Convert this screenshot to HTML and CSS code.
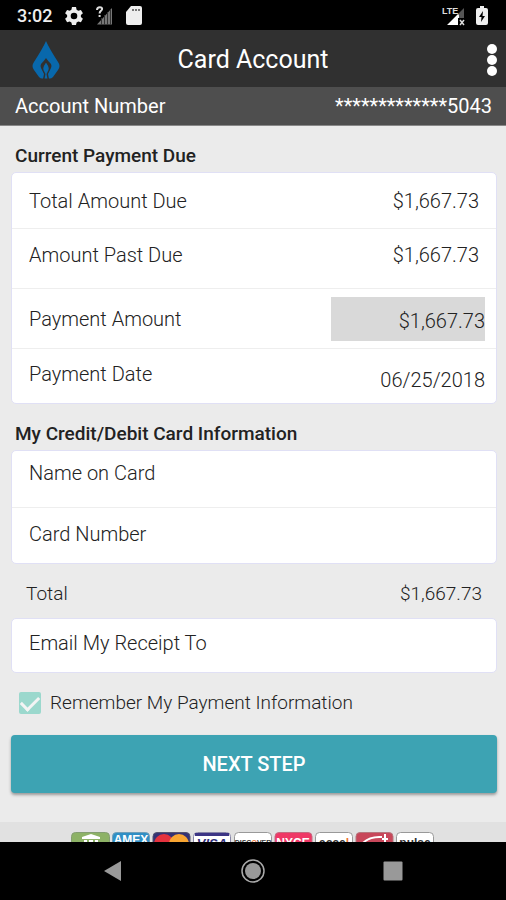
FILE: index.html
```html
<!DOCTYPE html>
<html lang="en">
<head>
<meta charset="utf-8">
<meta name="viewport" content="width=device-width, initial-scale=1">
<title>Card Account</title>
<link rel="stylesheet" href="styles.css">
</head>
<body>
<div class="status-bar">
  <div class="status-group">
    <span class="clock">3:02</span>
    <svg class="gear" width="18" height="20" viewBox="0 0 18 20" aria-hidden="true"><path fill="#eee" fill-rule="evenodd" d="M7 1h4l.6 2.7 1.7 1 2.6-.8 2 3.4-2 1.8v1.900l2 1.800-2 3.400-2.600-.800-1.700 1L11 19H7l-.6-2.600-1.700-1-2.600.800-2-3.400 2-1.800V9.100l-2-1.800 2-3.400 2.600.800 1.700-1zM9 6.700a3.300 3.300 0 1 0 0 6.600 3.300 3.300 0 0 0 0-6.600z"/></svg>
    <svg class="signal" width="17" height="20" viewBox="0 0 17 20" aria-hidden="true"><path fill="#777" d="M16 2v16.500H1z"/><path fill="none" stroke="#333" d="M5.500 12v7M8.500 9v10M11.500 6v13M14.500 3v16"/><path fill="#000" d="M0 0h8v11H0z"/><path fill="none" stroke="#ddd" stroke-width="2" d="M1 4c0-4 6-3.500 5-.5C5.500 5 3.600 5 3.600 7.500M3.600 9v2"/></svg>
    <svg width="16" height="20" viewBox="0 0 16 20" aria-hidden="true"><path fill="#eee" d="M5 0h9q2 0 2 2v15q0 2-2 2H2q-2 0-2-2V6z"/><path fill="none" stroke="#777" stroke-width="2" d="M6 4h2M9 4h2M12 4h2"/></svg>
  </div>
  <div class="status-group status-right">
    <svg width="23" height="20" viewBox="0 0 23 20" aria-hidden="true"><path fill="#555" d="M22 2v10h-5V7z"/><path fill="#fff" d="M16 8v11H5zM17 7v5h-2z"/><path stroke="#ddd" stroke-width="1.500" d="m18 14 4 5m0-5-4 5"/><text class="lte" x="0" y="8">LTE</text></svg>
    <svg width="12" height="20" viewBox="0 0 12 20" aria-hidden="true"><path fill="#eee" d="M4 0h4v2h2q2 0 2 2v13q0 2-2 2H2q-2 0-2-2V4q0-2 2-2h2z"/><path fill="#000" d="M7 5 3 11h2.500L5 16l4-6H6.500z"/></svg>
  </div>
</div>
<header class="app-bar">
  <a class="brand" href="#" aria-label="Home"><svg width="28" height="38" viewBox="0 0 28 38"><path fill="#0868ac" d="M14 0Q17 7 26 21Q29 25 26 29L21 36Q19 38 17 37.500H11Q9 38 7 36L2 29Q-1 25 2 21Q11 7 14 0z"/><path fill="#303030" d="M14 17q-2 3-5 6-1 2 0 4l3 6-1 5h1.500l1-5-2-4q-1-3 2.500-7 3.500 4 2.500 7l-2 4 1 5H17l-1-5 3-6q1-2 0-4-3-3-5-6z"/><path fill="#0868ac" d="M14 22q-2.500 3-1 6l1 4 1-4q1.500-3-1-6z"/></svg></a>
  <h1>Card Account</h1>
  <button class="menu" type="button" aria-label="More options"><svg width="12" height="34" viewBox="0 0 12 34"><g fill="#fff"><circle cx="6" cy="6" r="5"/><circle cx="6" cy="17" r="5"/><circle cx="6" cy="28" r="5"/></g></svg></button>
</header>
<div class="account-bar"><span>Account Number</span><span>*************5043</span></div>
<main>
  <form class="payment">
    <h2>Current Payment Due</h2>
    <div class="panel">
      <div class="row"><span>Total Amount Due</span><span class="value">$1,667.73</span></div>
      <div class="row row-tall row-high"><span>Amount Past Due</span><span class="value">$1,667.73</span></div>
      <div class="row row-tall"><label for="amount">Payment Amount</label><input class="amount" id="amount" type="text" value="$1,667.73"></div>
      <div class="row"><label class="raised" for="date">Payment Date</label><input class="date" id="date" type="text" value="06/25/2018"></div>
    </div>
    <h2>My Credit/Debit Card Information</h2>
    <div class="panel">
      <div class="row row-card row-high"><label class="raised" for="name">Name on Card</label><input id="name" type="text"></div>
      <div class="row row-card"><label class="raised" for="number">Card Number</label><input id="number" type="text"></div>
    </div>
    <div class="total"><span>Total</span><span>$1,667.73</span></div>
    <div class="panel">
      <div class="row row-email"><label for="email">Email My Receipt To</label><input id="email" type="email"></div>
    </div>
    <div class="remember"><input id="remember" type="checkbox" checked><label for="remember">Remember My Payment Information</label></div>
    <button class="next" type="submit">NEXT STEP</button>
  </form>
  <div class="brands">
    <svg width="364" height="24" viewBox="0 0 364 24" aria-hidden="true">
      <rect x=".5" y=".5" width="38" height="26" rx="4" fill="#8db266" stroke="#849e72"/>
      <path fill="#fff" d="m11 5 9-3 9 3v2H11zM13 8h3v9h-3zM18 8h4v9h-4zM24 8h3v9h-3z"/>
      <rect x="41.500" y=".5" width="37" height="26" rx="4" fill="#308fc5" stroke="#6f9fb9"/>
      <text class="logo logo-light" x="60" y="12">AMEX</text>
      <rect x="82" y=".5" width="37" height="26" rx="4" fill="#343275" stroke="#55536f"/>
      <circle cx="93" cy="12" r="10" fill="#e5323e"/><circle cx="108" cy="12" r="10" fill="#f8a532"/>
      <rect x="122.500" y=".5" width="37" height="26" rx="4" fill="#fff" stroke="#8886a7"/><path fill="#3c3585" d="M124 1h34v3h-34z"/>
      <text class="logo logo-visa" x="141" y="16">VISA</text>
      <rect x="163.500" y=".5" width="37" height="26" rx="4" fill="#fff" stroke="#999"/><text class="logo logo-small" x="182" y="13">DISC<tspan fill="#ed7335">O</tspan>VER</text>
      <rect x="204" y=".5" width="37" height="26" rx="4" fill="#ef3866" stroke="#c46c81"/><text class="logo logo-light" x="222" y="15">NYCE</text>
      <rect x="244.500" y=".5" width="37" height="26" rx="4" fill="#fff" stroke="#999"/><text class="logo" x="263" y="15">acce<tspan fill="#ed7335">l</tspan></text>
      <rect x="285" y=".5" width="37" height="26" rx="4" fill="#c8475a" stroke="#b6777e"/><path fill="none" stroke="#fff" stroke-width="2" d="M291 12q7-8 20-7M314 2v8M311 7h6"/>
      <rect x="325.500" y=".5" width="37" height="26" rx="4" fill="#fff" stroke="#999"/><text class="logo" x="344" y="15">pulse</text>
    </svg>
  </div>
</main>
<nav class="system-nav" aria-label="System navigation">
  <button type="button" aria-label="Back"><svg width="24" height="24" viewBox="0 0 24 24"><path fill="#999" d="m3 12 17-10v20z"/></svg></button>
  <button type="button" aria-label="Home"><svg width="24" height="24" viewBox="0 0 24 24"><circle cx="12" cy="12" r="11" fill="none" stroke="#aaa" stroke-width="1.500"/><circle cx="12" cy="12" r="8" fill="#999"/></svg></button>
  <button type="button" aria-label="Recent apps"><svg width="24" height="24" viewBox="0 0 24 24"><rect x="2.500" y="2.500" width="19" height="19" rx="1" fill="#999"/></svg></button>
</nav>
</body>
</html>
```
FILE: styles.css
```css
* { box-sizing: border-box; }
body {
  margin: 0;
  min-height: 100vh;
  display: flex;
  flex-direction: column;
  background: #ebebeb;
  color: #222;
  font-family: Roboto, "Liberation Sans", sans-serif;
  font-size: 20px;
  line-height: 24px;
}
button, input { font: inherit; color: inherit; border: 0; padding: 0; margin: 0; background: none; }
svg { display: block; }
h1, h2 { margin: 0; }
.status-bar {
  height: 30px;
  padding: 2px 18px 0 17px;
  display: flex;
  justify-content: space-between;
  align-items: center;
  background: #000;
  color: #eee;
}
.status-bar svg { overflow: visible; }
.status-group { display: flex; align-items: center; gap: 13px; }
.status-right { gap: 11px; }
.clock { font-size: 18px; font-weight: 500; }
.lte { font: 700 9px "Liberation Sans", sans-serif; fill: #ddd; }
.app-bar {
  height: 57px;
  padding: 2px 8px 0 32px;
  display: grid;
  grid-template-columns: 28px 1fr 52px;
  align-items: center;
  background: #303030;
  color: #fff;
}
.app-bar h1 { font-size: 25px; line-height: 32px; font-weight: 400; text-align: center; }
.menu { justify-self: end; }
.account-bar {
  height: 39px;
  padding: 0 14px 0 15px;
  display: flex;
  align-items: center;
  justify-content: space-between;
  background: #4e4e4e;
  border-bottom: 1px solid #888;
  color: #fff;
}
main { flex: 1; display: flex; flex-direction: column; }
.payment { padding: 18px 9px 0 11px; display: flex; flex-direction: column; }
h2 { font-size: 19px; font-weight: 500; padding: 0 4px; margin-bottom: 4px; }
.panel { background: #fff; border: 1px solid #e0e0f5; border-radius: 5px; margin-bottom: 18px; }
.row {
  min-height: 55px;
  padding: 0 11px 0 17px;
  display: flex;
  align-items: center;
  justify-content: space-between;
  font-weight: 300;
}
.row + .row { border-top: 1px solid #eee; }
.row-tall { min-height: 60px; }
.row-card { min-height: 56px; }
.row-email { min-height: 53px; padding-bottom: 6px; }
.row-high { padding-bottom: 8px; }
.value { padding-right: 6px; }
.row input { flex: 1; min-width: 0; height: 40px; margin-left: 16px; outline: 0; }
.row .amount { flex: 0 1 154px; height: 44px; padding-top: 4px; background: #d9d9d9; text-align: right; }
.row .date { flex: 0 1 154px; padding-top: 8px; text-align: right; }
.raised { padding-bottom: 4px; }
.total {
  padding: 0 15px;
  display: flex;
  justify-content: space-between;
  font-size: 19px;
  font-weight: 300;
  margin-bottom: 12px;
}
.remember { display: flex; align-items: center; gap: 9px; padding-left: 8px; font-size: 19px; font-weight: 300; }
.remember input {
  appearance: none;
  width: 22px;
  height: 22px;
  display: grid;
  place-items: center;
  border-radius: 2px;
  background: #9bd8cd;
}
.remember input:checked::before {
  content: "";
  width: 15px;
  height: 8px;
  border: solid #f4f4f4;
  border-width: 0 0 3px 3px;
  transform: translateY(-2px) rotate(-45deg);
}
.next {
  height: 58px;
  margin-top: 20px;
  border-radius: 4px;
  background: #3da3b3;
  box-shadow: 0 2px 3px #999;
  color: #fff;
  font-weight: 500;
}
.brands {
  height: 20px;
  margin-top: auto;
  padding-top: 10px;
  display: flex;
  justify-content: center;
  overflow: hidden;
  background: #e1e1e1;
}
.logo { font: 700 12px "Liberation Sans", sans-serif; text-anchor: middle; fill: #333; }
.logo-small { font-size: 7px; }
.logo-visa { font-size: 13px; font-style: italic; fill: #302f7b; }
.logo-light { fill: #fff; }
.system-nav {
  height: 58px;
  padding: 0 43px;
  display: grid;
  grid-template-columns: repeat(3, 1fr);
  place-items: center;
  background: #000;
}
```
